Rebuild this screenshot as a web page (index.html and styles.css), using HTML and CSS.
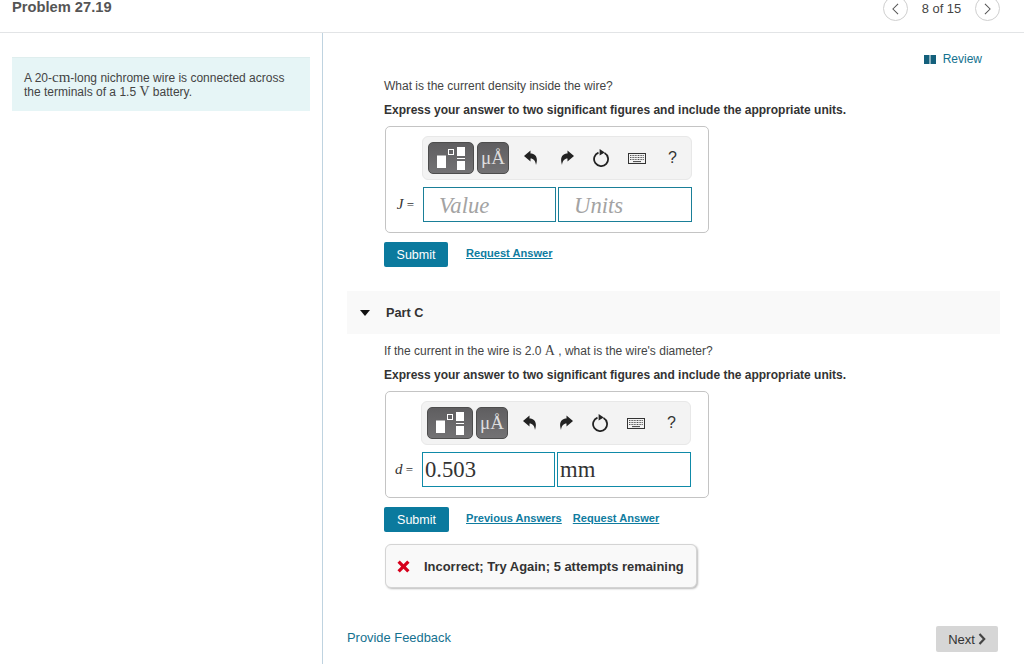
FILE: index.html
```html
<!DOCTYPE html>
<html lang="en">
<head>
<meta charset="utf-8">
<title>Problem 27.19</title>
<link rel="stylesheet" href="styles.css">
</head>
<body>
<svg class="defs" width="0" height="0" aria-hidden="true">
  <symbol id="i-undo" viewBox="0 0 14 16"><path d="M0 6 L6.5 .5 V3.6 C11.5 3.6 14.5 7.5 12 15 C11.5 11 9.5 8.6 6.5 8.6 V11.6 Z"/></symbol>
  <symbol id="i-redo" viewBox="0 0 14 16"><path d="M14 6 L7.5 .5 V3.6 C2.5 3.6 -.5 7.5 2 15 C2.5 11 4.5 8.6 7.5 8.6 V11.6 Z"/></symbol>
  <symbol id="i-reload" viewBox="0 0 16 18"><path d="M5.5 3.6 A7 7 0 1 0 11.5 4" fill="none" stroke="currentColor" stroke-width="1.8"/><path d="M6.6 0 L11.8 3.4 L6.6 6.6 Z"/></symbol>
  <symbol id="i-kbd" viewBox="0 0 18 11"><rect x=".5" y=".5" width="17" height="10" fill="#f3f3f3" stroke="#333"/><path d="M2 2.5h14M2 4.5h14M2 6.5h14" stroke="#555" stroke-dasharray="1 .6" fill="none"/><path d="M5 8.6h8" stroke="#444" fill="none"/></symbol>
  <symbol id="i-tmpl" viewBox="0 0 28 23"><rect x="0" y="8.5" width="9" height="12.5" fill="#fff"/><rect x="11.5" y="2.5" width="5" height="5" fill="none" stroke="#fff"/><rect x="20" y="0" width="8" height="9" fill="#fff"/><rect x="20" y="11" width="8" height="1" fill="#fff"/><rect x="20" y="14" width="8" height="9" fill="#fff"/></symbol>
</svg>

<header class="topbar">
  <h1 class="title">Problem 27.19</h1>
  <nav class="pager">
    <span class="circle"><svg class="chev" viewBox="0 0 8 14"><path d="M7 1 L1 7 L7 13"/></svg></span>
    <span class="count">8 of 15</span>
    <span class="circle"><svg class="chev" viewBox="0 0 8 14"><path d="M1 1 L7 7 L1 13"/></svg></span>
  </nav>
</header>

<div class="layout">
  <aside class="side">
    <div class="intro">A 20-<span class="unit unit-wide">cm</span>-long nichrome wire is connected across the terminals of a 1.5 <span class="unit">V</span> battery.</div>
  </aside>

  <main class="content">
    <div class="review-row">
      <a class="review"><svg class="book" viewBox="0 0 12 9"><path d="M0 0h5.5v9H0zM6.5 0H12v9H6.5z"/></svg>Review</a>
    </div>

    <section class="part part-b">
      <p class="q">What is the current density inside the wire?</p>
      <p class="req">Express your answer to two significant figures and include the appropriate units.</p>
      <div class="answer">
        <div class="toolbar">
          <span class="btn btn-wide"><svg class="tmpl"><use href="#i-tmpl"/></svg></span>
          <span class="btn btn-unit">μÅ</span>
          <svg class="ic ic-undo"><use href="#i-undo"/></svg>
          <svg class="ic ic-redo"><use href="#i-redo"/></svg>
          <svg class="ic ic-reload"><use href="#i-reload"/></svg>
          <svg class="ic ic-kbd"><use href="#i-kbd"/></svg>
          <span class="help">?</span>
        </div>
        <div class="inputs">
          <span class="var"><i>J</i> =</span>
          <span class="field placeholder">Value</span>
          <span class="field placeholder">Units</span>
        </div>
      </div>
      <div class="actions">
        <a class="submit">Submit</a>
        <a class="link">Request Answer</a>
      </div>
    </section>

    <div class="part-head">
      <span class="caret"></span>
      <span class="part-name">Part C</span>
    </div>

    <section class="part part-c">
      <p class="q">If the current in the wire is 2.0 <span class="unit">A</span> , what is the wire's diameter?</p>
      <p class="req">Express your answer to two significant figures and include the appropriate units.</p>
      <div class="answer answer-c">
        <div class="toolbar">
          <span class="btn btn-wide"><svg class="tmpl"><use href="#i-tmpl"/></svg></span>
          <span class="btn btn-unit">μÅ</span>
          <svg class="ic ic-undo"><use href="#i-undo"/></svg>
          <svg class="ic ic-redo"><use href="#i-redo"/></svg>
          <svg class="ic ic-reload"><use href="#i-reload"/></svg>
          <svg class="ic ic-kbd"><use href="#i-kbd"/></svg>
          <span class="help">?</span>
        </div>
        <div class="inputs">
          <span class="var"><i>d</i> =</span>
          <span class="field filled">0.503</span>
          <span class="field filled">mm</span>
        </div>
      </div>
      <div class="actions">
        <a class="submit">Submit</a>
        <a class="link">Previous Answers</a>
        <a class="link link-second">Request Answer</a>
      </div>
      <div class="feedback">
        <svg class="cross" viewBox="0 0 14 14"><path d="M3 .5 L7 4.5 L11 .5 L13.5 3 L9.5 7 L13.5 11 L11 13.5 L7 9.5 L3 13.5 L.5 11 L4.5 7 L.5 3 Z"/></svg>
        <span>Incorrect; Try Again; 5 attempts remaining</span>
      </div>
    </section>

    <footer class="foot">
      <a class="provide">Provide Feedback</a>
      <a class="next">Next<svg class="next-chev" viewBox="0 0 8 12"><path d="M1.5 1 L6.2 6 L1.5 11"/></svg></a>
    </footer>
  </main>
</div>
</body>
</html>
```

FILE: styles.css
```css
* { box-sizing: border-box; }
html, body { margin: 0; padding: 0; height: 664px; overflow: hidden; background: #fff; }
body { font-family: "Liberation Sans", Arial, sans-serif; font-size: 12px; color: #333; }
.defs { display: block; height: 0; }

.topbar { height: 33px; border-bottom: 1px solid #e2e4e6; display: flex; justify-content: space-between; align-items: flex-start; padding: 0 24px 0 12px; overflow: hidden; }
.title { margin: 0; font-size: 14.7px; line-height: 15px; font-weight: bold; color: #555; }
.pager { display: flex; align-items: center; margin-top: -4px; }
.circle { width: 25px; height: 25px; border: 1px solid #cfcfcf; border-radius: 50%; display: flex; align-items: center; justify-content: center; }
.chev { width: 7px; height: 12px; fill: none; stroke: #555; stroke-width: 1.2; }
.count { width: 67px; text-align: center; font-size: 12.9px; color: #444; }

.layout { display: flex; height: 631px; }
.side { width: 323px; flex: none; border-right: 1px solid #bfd3e0; padding: 24px 12px 0; }
.intro { background: #e6f5f6; border-top: 1px solid #dfeeee; height: 54px; padding: 12px 12px 0; font-size: 12px; line-height: 14px; color: #444; }
.unit { font-family: "Liberation Serif", serif; font-size: 14px; line-height: 1; }
.unit-wide { font-size: 15px; }

.content { flex: 1; padding-right: 24px; display: flex; flex-direction: column; }
.review-row { display: flex; justify-content: flex-end; padding: 19px 18px 0 0; height: 46px; }
.review { display: flex; align-items: center; height: 14px; color: #14718f; font-size: 12px; }
.book { width: 12px; height: 9px; fill: #14607c; margin-right: 7px; }

.part { padding-left: 61px; }
.q { margin: 0; font-size: 12px; line-height: 14px; color: #444; }
.req { margin: 10px 0 0; font-size: 12px; line-height: 14px; font-weight: bold; color: #333; }

.answer { width: 324px; height: 107px; margin: 9px 0 0 1px; border: 1px solid #c4c4c4; border-radius: 5px; padding: 9px 15px 0 0; }
.toolbar { width: 270px; height: 44px; margin-left: 36px; background: #f3f3f3; border: 1px solid #e8e8e8; border-radius: 6px; display: flex; align-items: center; padding-left: 5px; }
.btn { height: 32px; border: 1px solid #4d4d4d; border-radius: 5px; background: linear-gradient(#5f5e60, #737274); display: flex; align-items: center; justify-content: center; color: #fff; }
.btn-wide { width: 46px; }
.btn-unit { width: 32px; margin-left: 3px; font-family: "Liberation Serif", serif; font-size: 19px; color: #ddd; }
.tmpl { width: 28px; height: 23px; }
.ic { display: block; flex: none; fill: #222; color: #222; }
.ic-undo { width: 14px; height: 16px; margin-left: 15px; }
.ic-redo { width: 14px; height: 16px; margin-left: 22px; }
.ic-reload { width: 16px; height: 18px; margin-left: 19px; }
.ic-kbd { width: 18px; height: 11px; margin-left: 19px; }
.help { margin-left: 22px; font-size: 16px; color: #333; }

.inputs { display: flex; align-items: center; margin-top: 7px; height: 35px; }
.var { width: 37px; text-align: right; padding-right: 9px; font-family: "Liberation Serif", serif; font-size: 13px; color: #333; flex: none; }
.var i { font-size: 15px; }
.field { width: 133px; height: 35px; border: 1px solid #1a7f98; font-family: "Liberation Serif", serif; font-size: 22.7px; line-height: 33px; }
.field + .field { margin-left: 2px; width: 134px; }
.placeholder { font-style: italic; color: #a3a3a3; padding-left: 15px; line-height: 35px; }
.filled { color: #333; padding-left: 2px; border-color: #0f8aa8; }
.answer-c .toolbar { margin-left: 35px; }
.answer-c .var { width: 36px; }

.actions { display: flex; align-items: flex-start; margin-top: 9px; height: 25px; }
.submit { width: 64px; height: 25px; background: #0b7a9e; border-radius: 2px; color: #fff; font-size: 12.5px; line-height: 27px; text-align: center; }
.part-c .submit { width: 65px; }
.link { margin: 5px 0 0 18px; font-size: 11.1px; line-height: 13px; font-weight: bold; color: #0f7c9f; text-decoration: underline; }
.part-c .link { margin-left: 17px; }
.part-c .link-second { margin-left: 11px; }

.part-head { height: 43px; margin: 24px 0 0 24px; background: #f9f9f9; display: flex; align-items: center; padding-left: 13px; }
.caret { width: 0; height: 0; border-left: 5px solid transparent; border-right: 5px solid transparent; border-top: 6px solid #111; margin-right: 16px; }
.part-name { font-size: 12.7px; font-weight: bold; color: #333; }

.part-c { padding-top: 10px; }

.feedback { width: 312px; height: 44px; margin: 12px 0 0 1px; background: #f9f9f9; border: 1px solid #d4d4d4; border-radius: 6px; box-shadow: 1px 1px 2px #bbb; display: flex; align-items: center; padding: 1px 0 0 11px; font-size: 12.95px; font-weight: bold; color: #333; }
.cross { width: 13px; height: 13px; fill: #d6001c; margin-right: 14px; flex: none; }

.foot { display: flex; justify-content: space-between; align-items: flex-start; margin: 38px 2px 0 24px; }
.provide { margin-top: 4px; font-size: 12.9px; color: #14718f; }
.next { width: 62px; height: 26px; background: #d6d6d6; border-radius: 2px; display: flex; align-items: center; justify-content: center; font-size: 13px; color: #333; }
.next-chev { width: 8px; height: 12px; margin-left: 3px; fill: none; stroke: #444; stroke-width: 2.2; }
```
